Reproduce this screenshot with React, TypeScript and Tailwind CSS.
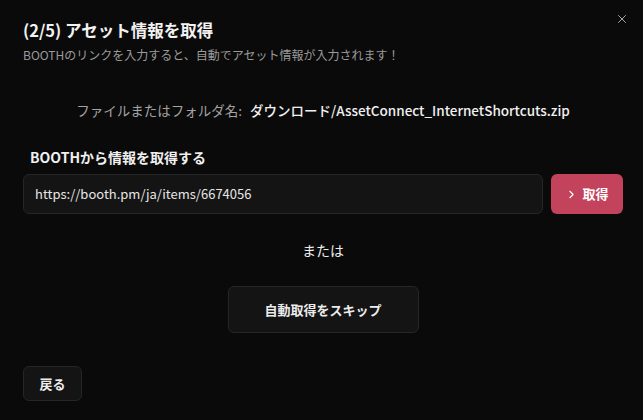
import { X, ChevronRight } from 'lucide-react';

const font = { fontFamily: '"Noto Sans CJK JP", "Noto Sans", sans-serif' };

export default function App() {
  return (
    <div style={font} className="relative h-[420px] w-[643px] overflow-hidden bg-[#0b0a0a] text-[#e8e8e8]">
      <button className="absolute right-[14px] top-[12px] text-[#bdbdbd]">
        <X className="h-[14px] w-[14px]" strokeWidth={1.5} />
      </button>

      <div className="flex h-full flex-col pl-[23px] pr-[20px] pt-[17px]">
        <div className="text-[16.5px] font-bold leading-[26px] text-[#f2f2f2]">(2/5) アセット情報を取得</div>
        <div className="mt-[3px] text-[12px] leading-[18px] text-[#9a9a9a]">
          BOOTHのリンクを入力すると、自動でアセット情報が入力されます！
        </div>

        <div className="mt-[36px] flex items-baseline justify-center gap-[8px] text-[13.5px] leading-[20px]">
          <span className="text-[#a3a3a3]">ファイルまたはフォルダ名:</span>
          <span className="font-medium text-[#f0f0f0]">ダウンロード/AssetConnect_InternetShortcuts.zip</span>
        </div>

        <div className="mt-[27px] pl-[7px] text-[14px] font-bold leading-[20px] text-[#f0f0f0]">BOOTHから情報を取得する</div>

        <div className="mt-[7px] flex gap-[8px]">
          <div className="flex h-[40px] flex-1 items-center rounded-[6px] border border-[#262626] bg-[#141414] px-[11px] text-[13px] text-[#e6e6e6]">
            https://booth.pm/ja/items/6674056
          </div>
          <button className="flex h-[40px] w-[72px] items-center justify-center gap-[4px] rounded-[6px] bg-[#c3425c] text-[13px] font-bold text-white">
            <ChevronRight className="h-[13px] w-[13px]" strokeWidth={2} />
            取得
          </button>
        </div>

        <div className="mt-[26px] text-center text-[14px] leading-[20px] text-[#ececec]">または</div>

        <div className="mt-[26px] flex justify-center">
          <button className="h-[47px] w-[191px] rounded-[6px] border border-[#262626] bg-[#141414] text-[13px] font-bold text-[#ececec]">
            自動取得をスキップ
          </button>
        </div>

        <div className="mt-[33px]">
          <button className="h-[35px] w-[59px] rounded-[6px] border border-[#262626] bg-[#141414] text-[13px] font-bold text-[#ececec]">
            戻る
          </button>
        </div>
      </div>
    </div>
  );
}
